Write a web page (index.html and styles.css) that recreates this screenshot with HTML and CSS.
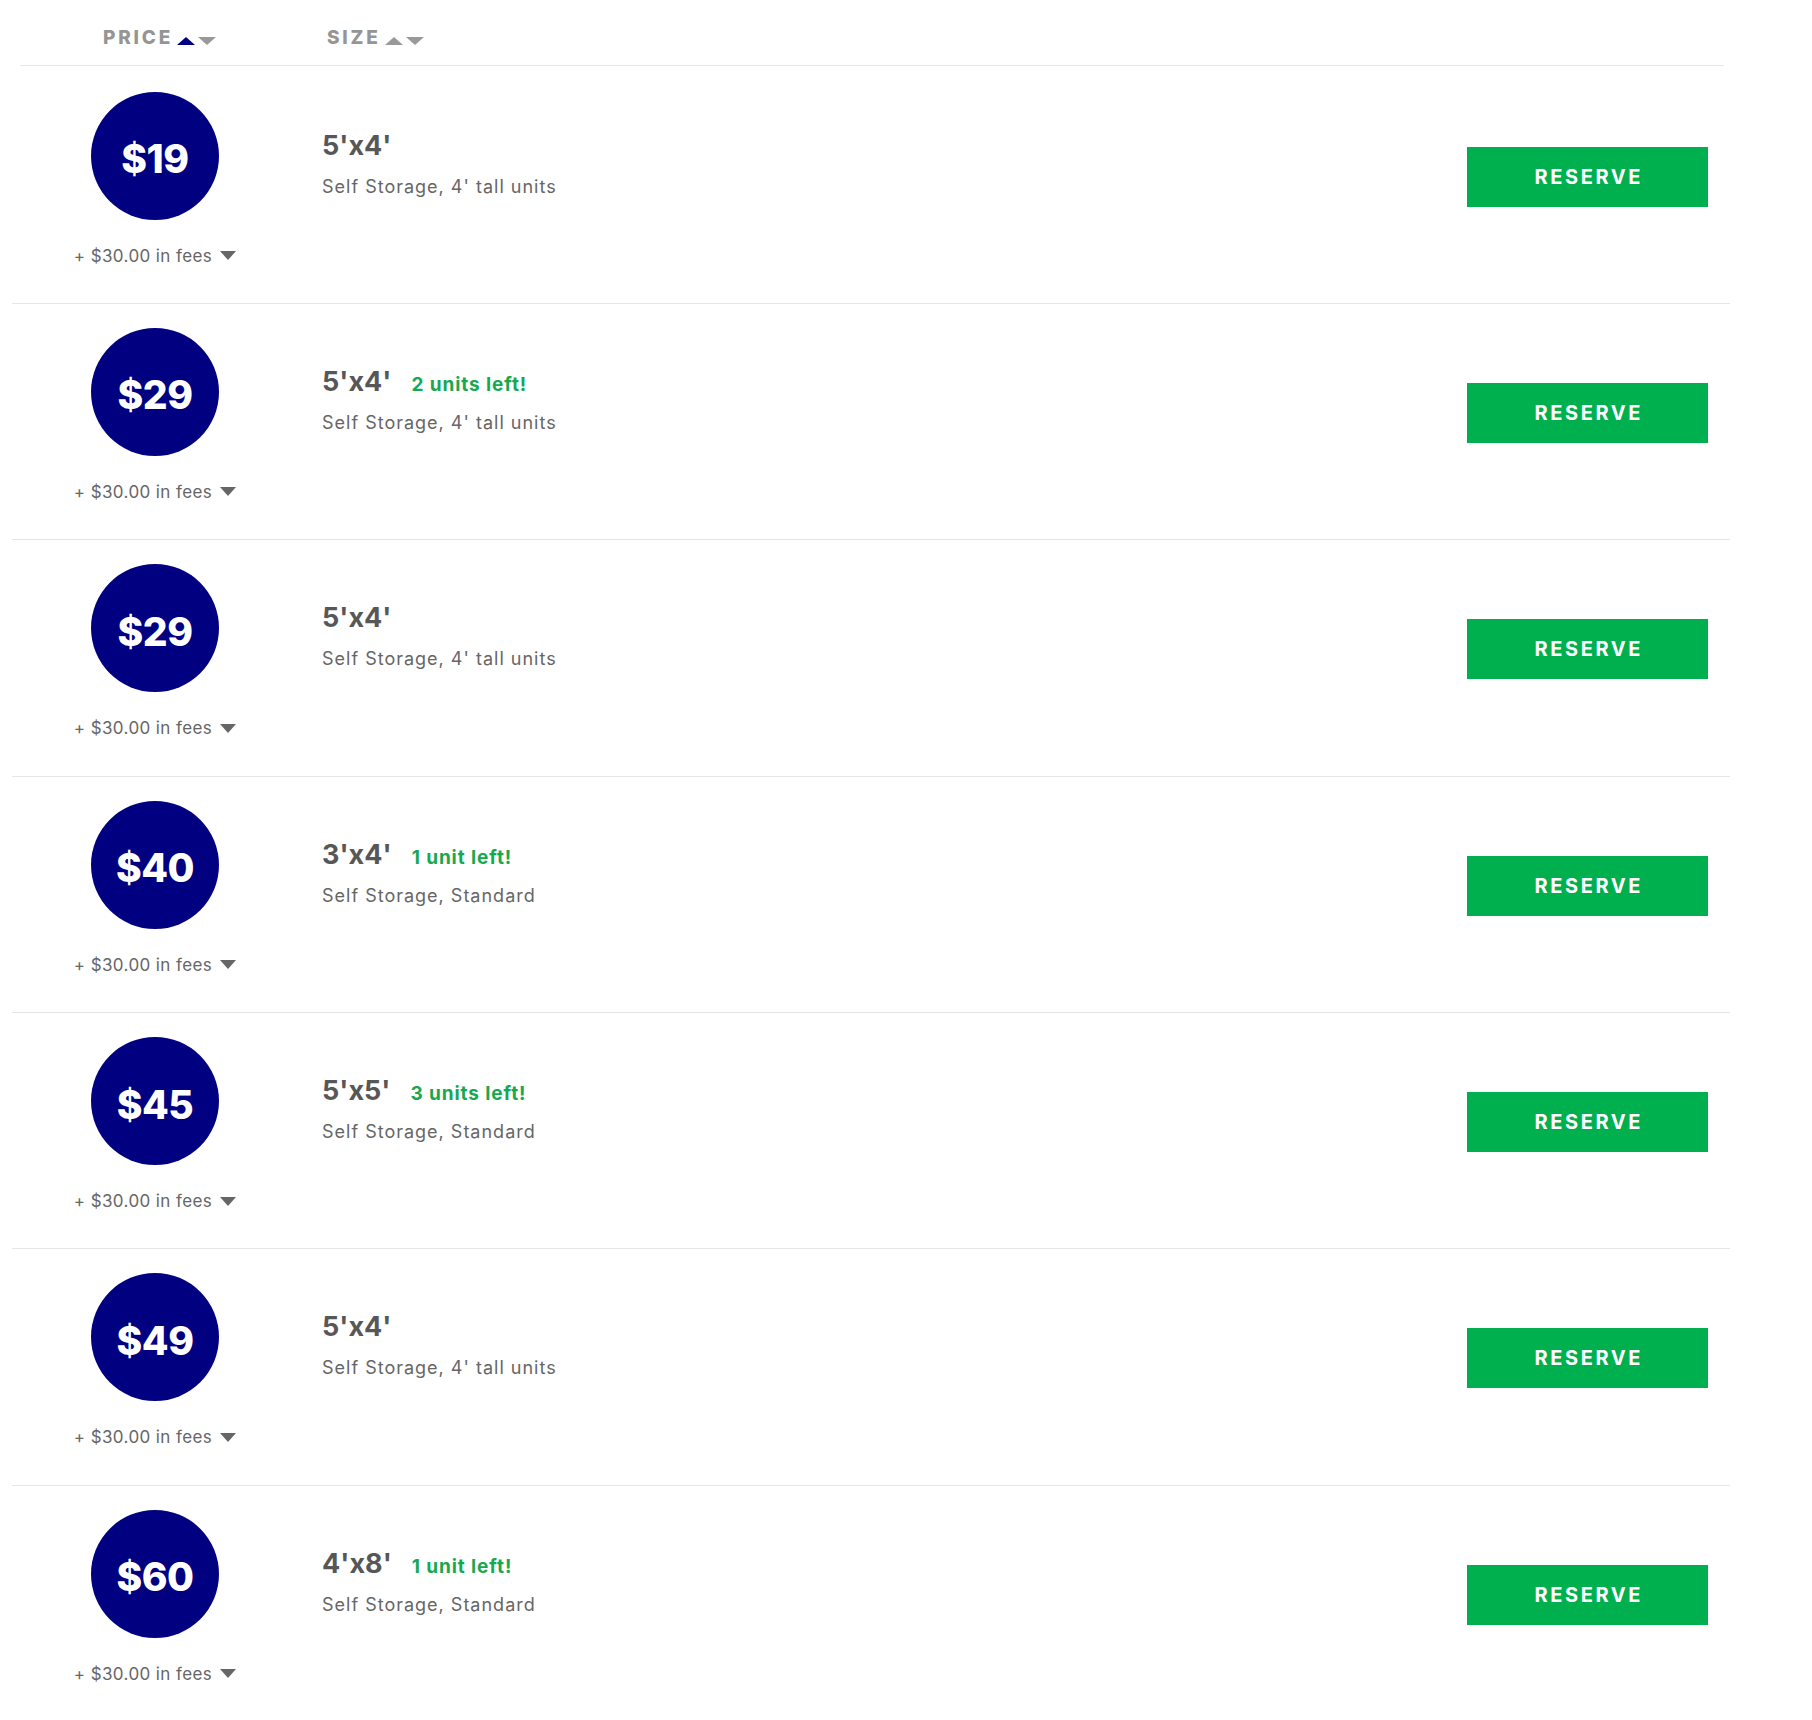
FILE: index.html
```html
<!DOCTYPE html>
<html lang="en">
  <head>
    <meta charset="UTF-8" />
    <meta name="viewport" content="width=device-width, initial-scale=1.0" />
    <title>Storage Units</title>
    <link rel="stylesheet" href="styles.css">
  </head>
  <body>
    <div class="unit-list">
      <div class="sort-bar">
        <div class="sort-btn sort-price">
          <span>PRICE</span>
          <span class="arrows"><i class="tri-up active"></i><i class="tri-down"></i></span>
        </div>
        <div class="sort-btn">
          <span>SIZE</span>
          <span class="arrows"><i class="tri-up"></i><i class="tri-down"></i></span>
        </div>
      </div>

      <div class="unit-row">
        <div class="price-col">
          <div class="price-badge">$19</div>
          <div class="fees">+ $30.00 in fees <i class="caret"></i></div>
        </div>
        <div class="info-col">
          <div class="size-line"><span class="size">5'x4'</span></div>
          <div class="desc">Self Storage, 4' tall units</div>
        </div>
        <button class="reserve">RESERVE</button>
      </div>

      <div class="unit-row">
        <div class="price-col">
          <div class="price-badge">$29</div>
          <div class="fees">+ $30.00 in fees <i class="caret"></i></div>
        </div>
        <div class="info-col">
          <div class="size-line"><span class="size">5'x4'</span><span class="units-left">2 units left!</span></div>
          <div class="desc">Self Storage, 4' tall units</div>
        </div>
        <button class="reserve">RESERVE</button>
      </div>

      <div class="unit-row">
        <div class="price-col">
          <div class="price-badge">$29</div>
          <div class="fees">+ $30.00 in fees <i class="caret"></i></div>
        </div>
        <div class="info-col">
          <div class="size-line"><span class="size">5'x4'</span></div>
          <div class="desc">Self Storage, 4' tall units</div>
        </div>
        <button class="reserve">RESERVE</button>
      </div>

      <div class="unit-row">
        <div class="price-col">
          <div class="price-badge">$40</div>
          <div class="fees">+ $30.00 in fees <i class="caret"></i></div>
        </div>
        <div class="info-col">
          <div class="size-line"><span class="size">3'x4'</span><span class="units-left">1 unit left!</span></div>
          <div class="desc">Self Storage, Standard</div>
        </div>
        <button class="reserve">RESERVE</button>
      </div>

      <div class="unit-row">
        <div class="price-col">
          <div class="price-badge">$45</div>
          <div class="fees">+ $30.00 in fees <i class="caret"></i></div>
        </div>
        <div class="info-col">
          <div class="size-line"><span class="size">5'x5'</span><span class="units-left">3 units left!</span></div>
          <div class="desc">Self Storage, Standard</div>
        </div>
        <button class="reserve">RESERVE</button>
      </div>

      <div class="unit-row">
        <div class="price-col">
          <div class="price-badge">$49</div>
          <div class="fees">+ $30.00 in fees <i class="caret"></i></div>
        </div>
        <div class="info-col">
          <div class="size-line"><span class="size">5'x4'</span></div>
          <div class="desc">Self Storage, 4' tall units</div>
        </div>
        <button class="reserve">RESERVE</button>
      </div>

      <div class="unit-row">
        <div class="price-col">
          <div class="price-badge">$60</div>
          <div class="fees">+ $30.00 in fees <i class="caret"></i></div>
        </div>
        <div class="info-col">
          <div class="size-line"><span class="size">4'x8'</span><span class="units-left">1 unit left!</span></div>
          <div class="desc">Self Storage, Standard</div>
        </div>
        <button class="reserve">RESERVE</button>
      </div>
    </div>
  </body>
</html>
```

FILE: styles.css
```css
:root {
  --navy: #000080;
  --green: #00b04f;
  --line: #e6e6e6;
  --text: #575757;
  --muted: #666;
}

body {
  margin: 0;
  font-family: Inter, "Noto Sans", sans-serif;
  background: #fff;
}

.unit-list {
  margin: 0 82px 0 12px;
}

/* sort header */
.sort-bar {
  display: flex;
  align-items: center;
  height: 55px;
  padding-top: 10px;
  margin: 0 6px 1.5px 8px;
  border-bottom: 1px solid var(--line);
}

.sort-btn {
  display: flex;
  align-items: center;
  color: #959595;
  font-size: 19px;
  font-weight: 800;
  letter-spacing: 2.8px;
}

.sort-price {
  margin-left: 83px;
  width: 224px;
}

.arrows {
  display: flex;
  gap: 3px;
  margin: 6px 0 0 4px;
}

.tri-up {
  border-left: 9px solid transparent;
  border-right: 9px solid transparent;
  border-bottom: 8px solid #999;
}

.tri-up.active {
  border-bottom-color: var(--navy);
}

.tri-down {
  border-left: 9px solid transparent;
  border-right: 9px solid transparent;
  border-top: 8px solid #999;
}

/* unit rows */
.unit-row {
  display: flex;
  height: 236.4px;
  box-sizing: border-box;
  border-bottom: 1px solid var(--line);
}

.price-col {
  width: 286px;
  flex-shrink: 0;
  display: flex;
  flex-direction: column;
  align-items: center;
  padding-top: 24px;
}

.price-badge {
  width: 128px;
  height: 128px;
  box-sizing: border-box;
  padding-top: 6px;
  border-radius: 50%;
  background: var(--navy);
  color: #fff;
  display: flex;
  align-items: center;
  justify-content: center;
  font-size: 39px;
  font-weight: 800;
  letter-spacing: -0.5px;
}

.fees {
  margin-top: 24px;
  display: flex;
  align-items: center;
  gap: 8px;
  font-size: 17px;
  line-height: 24px;
  letter-spacing: 0.4px;
  color: var(--muted);
}

.caret {
  border-left: 8.5px solid transparent;
  border-right: 8.5px solid transparent;
  border-top: 9px solid var(--muted);
}

.info-col {
  flex: 1;
  padding: 61px 0 0 24px;
}

.size-line {
  display: flex;
  align-items: baseline;
  gap: 20px;
}

.size {
  font-size: 27px;
  line-height: 34px;
  font-weight: 700;
  color: var(--text);
}

.units-left {
  font-size: 19px;
  font-weight: 700;
  color: #18a84f;
  letter-spacing: 0.9px;
}

.desc {
  margin-top: 12px;
  font-size: 18px;
  line-height: 24px;
  color: var(--muted);
  letter-spacing: 1px;
}

.reserve {
  margin: 79px 22px 0 0;
  width: 241px;
  height: 60px;
  padding: 0 0 0 2.6px;
  flex-shrink: 0;
  border: none;
  border-radius: 0;
  background: var(--green);
  color: #fff;
  font-family: Inter, "Noto Sans", sans-serif;
  font-size: 20px;
  font-weight: 700;
  letter-spacing: 2.6px;
  cursor: pointer;
}
```
